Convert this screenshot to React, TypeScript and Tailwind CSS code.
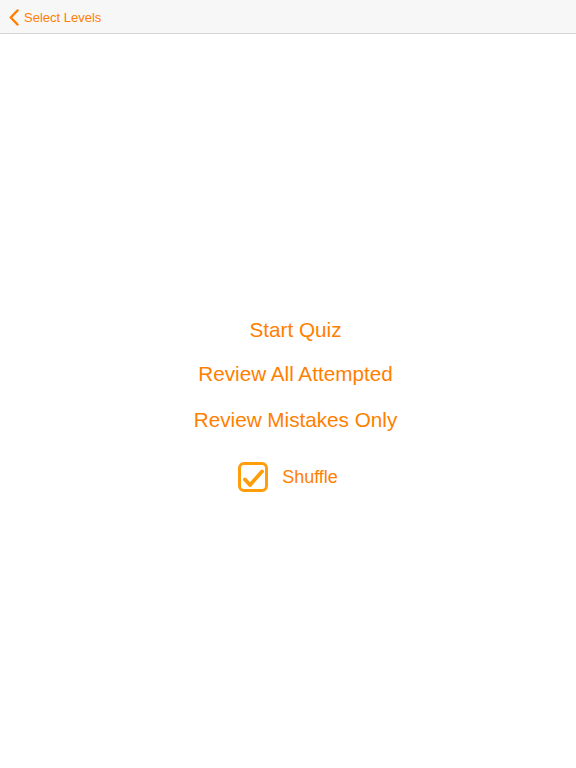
import React, { useState } from "react";

export default function App() {
  const [shuffle, setShuffle] = useState(true);

  return (
    <div className="flex h-[768px] w-[576px] flex-col bg-white font-['Liberation_Sans',sans-serif] text-[#ff8000]">
      {/* Nav bar */}
      <div className="flex h-[34px] items-center border-b border-[#d4d4d4] bg-[#f7f7f7]">
        <button className="flex items-center gap-[5px] pl-[9px] pt-[2px] text-[13px] text-[#ff8000]">
          <svg width="10" height="17" viewBox="0 0 10 17" fill="none">
            <path
              d="M8.5 1.5L1.8 8.5L8.5 15.5"
              stroke="#ff8000"
              strokeWidth="2.5"
              strokeLinecap="round"
              strokeLinejoin="round"
            />
          </svg>
          Select Levels
        </button>
      </div>

      {/* Menu */}
      <div className="flex flex-1 flex-col items-center pt-[283px]">
        <div className="ml-[15px] flex flex-col items-center">
          <button className="h-[26px] text-[20.7px] leading-[26px]">Start Quiz</button>
          <button className="mt-[18px] h-[26px] text-[20.7px] leading-[26px]">
            Review All Attempted
          </button>
          <button className="mt-[20px] h-[26px] text-[20.7px] leading-[26px]">
            Review Mistakes Only
          </button>
        </div>
        <button
          className="mt-[29px] flex items-center gap-[14px]"
          onClick={() => setShuffle(!shuffle)}
        >
          <svg width="30" height="30" viewBox="0 0 30 30" fill="none">
            <rect
              x="1.5"
              y="1.5"
              width="27"
              height="27"
              rx="4.5"
              stroke="#ff9d0a"
              strokeWidth="3"
            />
            {shuffle && (
              <path
                d="M7 17.5L12 23L24 9.5"
                stroke="#ff9d0a"
                strokeWidth="3.8"
                strokeLinecap="round"
                strokeLinejoin="round"
              />
            )}
          </svg>
          <span className="text-[18px]">Shuffle</span>
        </button>
      </div>
    </div>
  );
}
